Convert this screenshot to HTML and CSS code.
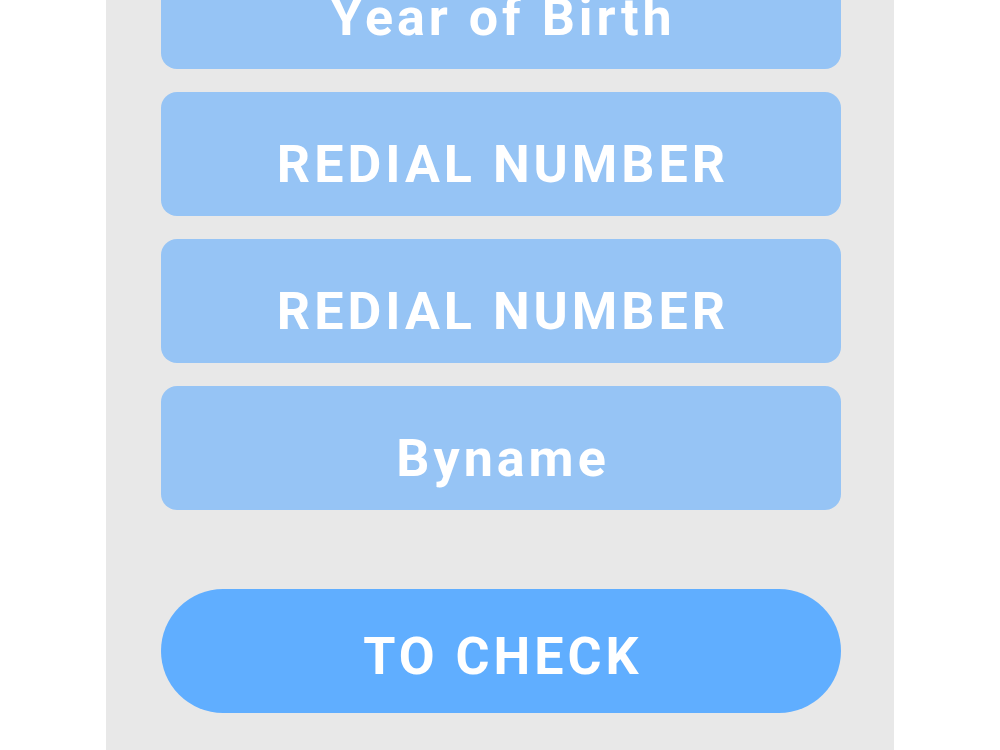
FILE: index.html
```html
<!DOCTYPE html>
<html lang="en">
<head>
<meta charset="utf-8">
<title>Form</title>
<link rel="stylesheet" href="styles.css">
</head>
<body>
<main class="panel">
  <div class="fields">
    <div class="field">Year of Birth</div>
    <div class="field">REDIAL NUMBER</div>
    <div class="field">REDIAL NUMBER</div>
    <div class="field">Byname</div>
  </div>
  <button class="check">TO CHECK</button>
</main>
</body>
</html>
```
FILE: styles.css
```css
html, body {
  margin: 0;
  padding: 0;
  background: #ffffff;
  height: 750px;
  overflow: hidden;
}
.panel {
  margin-left: 106px;
  width: 788px;
  height: 750px;
  background: #e8e8e8;
  box-sizing: border-box;
  padding: 0 53px 0 55px;
  display: flex;
  flex-direction: column;
  overflow: hidden;
  font-family: Roboto, "Liberation Sans", sans-serif;
}
.fields {
  margin-top: -55px;
  display: flex;
  flex-direction: column;
  gap: 23px;
}
.field {
  height: 124px;
  box-sizing: border-box;
  padding-top: 21px;
  padding-left: 4px;
  border-radius: 16px;
  background: #96c4f5;
  color: #ffffff;
  font-size: 52px;
  font-weight: 700;
  letter-spacing: 4px;
  display: flex;
  align-items: center;
  justify-content: center;
}
.check {
  margin-top: 79px;
  height: 124px;
  width: 100%;
  border: none;
  box-sizing: border-box;
  padding: 11px 0 0 4px;
  border-radius: 62px;
  background: #60aeff;
  color: #ffffff;
  font-family: Roboto, "Liberation Sans", sans-serif;
  font-size: 52px;
  font-weight: 700;
  letter-spacing: 4px;
  display: flex;
  align-items: center;
  justify-content: center;
}
```
